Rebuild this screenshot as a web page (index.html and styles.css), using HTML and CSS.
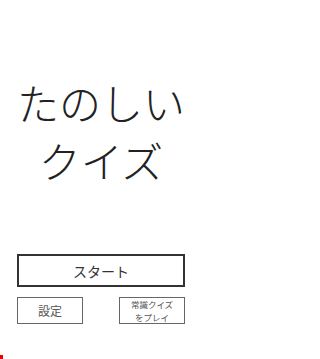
FILE: index.html
```html
<!DOCTYPE html>
<html lang="ja">
<head>
<meta charset="utf-8">
<link rel="stylesheet" href="styles.css">
</head>
<body>
<div class="screen">
  <h1 class="title">たのしい<br>クイズ</h1>
  <button class="start">スタート</button>
  <div class="row">
    <button class="small settings">設定</button>
    <button class="small quiz"><span class="line">常識クイズ</span><span class="line">をプレイ</span></button>
  </div>
  <span class="dot"></span>
</div>
</body>
</html>
```

FILE: styles.css
```css
html, body {
  margin: 0;
  padding: 0;
  background: #fff;
}
.screen {
  position: relative;
  width: 202px;
  height: 359px;
  box-sizing: border-box;
  padding-left: 17px;
  display: flex;
  flex-direction: column;
  font-family: "Noto Sans CJK JP", "Noto Sans", sans-serif;
  overflow: hidden;
}
.title {
  margin: 73px 0 0 0;
  width: 168px;
  font-size: 42px;
  line-height: 58px;
  font-weight: 300;
  text-align: center;
  color: #222;
}
.start {
  margin-top: 65px;
  width: 168px;
  height: 33px;
  box-sizing: border-box;
  border: 2px solid #333;
  background: #fff;
  font-family: inherit;
  font-size: 14px;
  color: #333;
  padding: 0;
}
.row {
  margin-top: 10px;
  width: 168px;
  display: flex;
  justify-content: space-between;
}
.small {
  width: 66px;
  height: 27px;
  box-sizing: border-box;
  border: 1px solid #666;
  background: #fff;
  font-family: inherit;
  color: #555;
  padding: 0;
}
.settings {
  font-size: 12px;
}
.quiz {
  display: flex;
  flex-direction: column;
  align-items: center;
  justify-content: center;
  font-size: 8.5px;
  line-height: 12.5px;
}
.line {
  display: block;
  height: 12.5px;
}
.dot {
  position: absolute;
  left: 0;
  bottom: 0;
  width: 3px;
  height: 4px;
  background: #e00;
}
```
